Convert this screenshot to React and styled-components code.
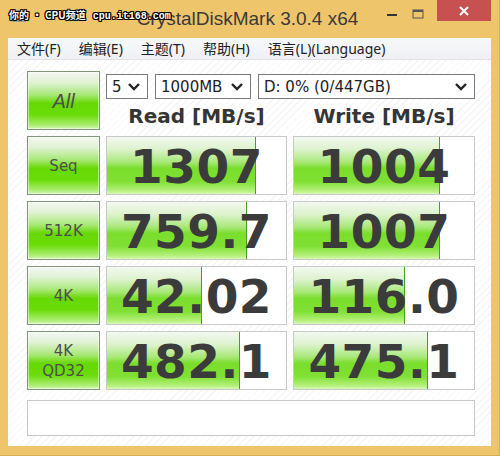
import styled, {createGlobalStyle} from 'styled-components';

const GlobalStyle = createGlobalStyle`
  html, body {
    margin: 0;
    padding: 0;
    background: #ffffff;
  }
`;

const results = [
  {label: ['Seq'], read: {text: '1307', fill: 148}, write: {text: '1004', fill: 145}},
  {label: ['512K'], read: {text: '759.7', fill: 139}, write: {text: '1007', fill: 145}},
  {label: ['4K'], read: {text: '42.02', fill: 94}, write: {text: '116.0', fill: 110}},
  {label: ['4K', 'QD32'], read: {text: '482.1', fill: 132}, write: {text: '475.1', fill: 133}},
];

const menus = ['文件(F)', '编辑(E)', '主题(T)', '帮助(H)', '语言(L)(Language)'];

const Chevron = () => (
  <svg width='14' height='10' viewBox='0 0 14 10'>
    <polyline points='2,2 7,7 12,2' fill='none' stroke='#222' strokeWidth='2.4' />
  </svg>
);

const App = () => {
  return (
    <>
      <GlobalStyle />
      <Window>
        <TitleBar>
          <AppIcon>
            <svg width='18' height='16' viewBox='0 0 18 16'>
              <rect x='1' y='2' width='16' height='12' rx='2' fill='#9aa09a' />
              <rect x='3' y='4' width='12' height='5' fill='#55cc22' />
            </svg>
          </AppIcon>
          <Title>CrystalDiskMark 3.0.4 x64</Title>
          <Controls>
            <CtrlButton>
              <svg width='12' height='12' viewBox='0 0 12 12'>
                <rect x='1' y='6' width='10' height='2' fill='#333' />
              </svg>
            </CtrlButton>
            <CtrlButton>
              <svg width='12' height='12' viewBox='0 0 12 12'>
                <rect x='1' y='2' width='10' height='8' fill='none' stroke='#555' strokeWidth='1' />
                <rect x='1' y='2' width='10' height='2' fill='#555' />
              </svg>
            </CtrlButton>
            <CloseButton>
              <svg width='12' height='12' viewBox='0 0 12 12'>
                <path d='M2 2 L10 10 M10 2 L2 10' stroke='#fff' strokeWidth='2' />
              </svg>
            </CloseButton>
          </Controls>
          <Watermark>
            你的<span className='dot'>•</span>CPU频道<span className='url'>cpu.it168.com</span>
          </Watermark>
        </TitleBar>
        <MenuBar>
          {menus.map((m) => (
            <MenuItem key={m}>{m}</MenuItem>
          ))}
        </MenuBar>
        <Client>
          <Board>
            <LabelButton $italic>All</LabelButton>
            <TopPanel>
              <Selects>
                <Select $w={42}>
                  <span>5</span>
                  <Chevron />
                </Select>
                <Select $w={96}>
                  <span>1000MB</span>
                  <Chevron />
                </Select>
                <Select $w={217}>
                  <span>D: 0% (0/447GB)</span>
                  <Chevron />
                </Select>
              </Selects>
              <Headers>
                <Header>Read [MB/s]</Header>
                <Header>Write [MB/s]</Header>
              </Headers>
            </TopPanel>
            {results.map((r) => (
              <Row key={r.label.join()}>
                <LabelButton>
                  {r.label.map((l) => (
                    <span key={l}>{l}</span>
                  ))}
                </LabelButton>
                <ValueBox $fill={r.read.fill}>{r.read.text}</ValueBox>
                <ValueBox $fill={r.write.fill}>{r.write.text}</ValueBox>
              </Row>
            ))}
          </Board>
          <Comment />
        </Client>
      </Window>
    </>
  );
};

export default App;

const Window = styled.div`
  width: 500px;
  height: 456px;
  box-sizing: border-box;
  display: flex;
  flex-direction: column;
  padding: 0 8px 9px 8px;
  background: #efc56c;
  border-right: 1px solid #d8ad58;
  border-bottom: 1px solid #d8ad58;
  font-family: 'DejaVu Sans', 'Noto Sans CJK SC', sans-serif;
`;

const TitleBar = styled.div`
  position: relative;
  height: 38px;
  flex-shrink: 0;
  display: flex;
  align-items: flex-start;
`;

const AppIcon = styled.div`
  width: 20px;
  padding-top: 8px;
  padding-left: 2px;
`;

const Title = styled.div`
  flex: 1;
  text-align: center;
  padding-top: 7px;
  margin-left: 86px;
  font-family: 'Liberation Sans', Arial, sans-serif;
  font-size: 19px;
  color: #3a3a3a;
  line-height: 24px;
  white-space: nowrap;
`;

const Controls = styled.div`
  display: flex;
  align-items: flex-start;
`;

const CtrlButton = styled.div`
  width: 26px;
  height: 21px;
  display: flex;
  align-items: center;
  justify-content: center;
  margin-top: 3px;
`;

const CloseButton = styled.div`
  width: 54px;
  height: 21px;
  margin-left: 6px;
  display: flex;
  align-items: center;
  justify-content: center;
  background: #c75050;
`;

const Watermark = styled.div`
  position: absolute;
  left: 1px;
  top: 8px;
  font-family: 'Noto Sans CJK SC', sans-serif;
  font-size: 10px;
  font-weight: 700;
  line-height: 14px;
  color: #ffffff;
  white-space: nowrap;
  text-shadow:
    1px 0 0 #000,
    -1px 0 0 #000,
    0 1px 0 #000,
    0 -1px 0 #000,
    1px 1px 0 #000,
    -1px -1px 0 #000,
    1px -1px 0 #000,
    -1px 1px 0 #000;

  .dot {
    margin: 0 3px;
  }

  .url {
    font-family: 'Liberation Mono', monospace;
    font-size: 10px;
    margin-left: 7px;
  }
`;

const MenuBar = styled.div`
  height: 22px;
  flex-shrink: 0;
  display: flex;
  align-items: center;
  gap: 18px;
  padding-left: 9px;
  background: linear-gradient(#f7f8fa, #eef0f3);
  border-top: 1px solid #fbfbfb;
  box-sizing: border-box;
  border-bottom: 1px solid #e3e3e3;
`;

const MenuItem = styled.span`
  font-family: 'Noto Sans', 'Noto Sans CJK SC', sans-serif;
  font-size: 14px;
  color: #222;
  line-height: 20px;
`;

const Client = styled.div`
  flex: 1;
  display: flex;
  flex-direction: column;
  gap: 10px;
  padding: 11px 16px 10px 18px;
  background: repeating-linear-gradient(135deg, #ffffff 0 4px, #f6f6f6 4px 5px);
  border-left: 1px solid #fdfdfd;
`;

const Board = styled.div`
  display: grid;
  grid-template-columns: 73px 181px 182px;
  grid-auto-rows: 59px;
  column-gap: 6px;
  row-gap: 6px;
`;

const Row = styled.div`
  display: contents;
`;

const LabelButton = styled.div`
  box-sizing: border-box;
  display: flex;
  flex-direction: column;
  align-items: center;
  justify-content: center;
  border: 1px solid #7f9478;
  box-shadow: inset 0 0 0 1px rgba(255, 255, 255, 0.5);
  background: linear-gradient(
    #f4f7f2 0%,
    #e0f2d4 18%,
    #a8e876 40%,
    #66d904 55%,
    #6adc08 75%,
    #a6ec6a 92%,
    #d2f6b0 100%
  );
  font-family: ${(p) => (p.$italic ? "'Liberation Sans', Arial, sans-serif" : "'DejaVu Sans', sans-serif")};
  font-size: ${(p) => (p.$italic ? '20px' : '15px')};
  font-style: ${(p) => (p.$italic ? 'italic' : 'normal')};
  color: #4e4e4e;
  line-height: 20px;
`;

const TopPanel = styled.div`
  grid-column: 2 / span 2;
  display: flex;
  flex-direction: column;
`;

const Selects = styled.div`
  display: flex;
  gap: 7px;
  margin-top: 3px;
`;

const Select = styled.div`
  width: ${(p) => p.$w}px;
  height: 25px;
  box-sizing: border-box;
  display: flex;
  align-items: center;
  justify-content: space-between;
  padding: 0 6px 0 5px;
  border: 1px solid #7a7a7a;
  background: #ffffff;
  font-family: 'DejaVu Sans', sans-serif;
  font-size: 15px;
  color: #222;
`;

const Headers = styled.div`
  display: grid;
  grid-template-columns: 181px 182px;
  column-gap: 6px;
  margin-top: 5px;
`;

const Header = styled.div`
  text-align: center;
  font-family: 'DejaVu Sans', sans-serif;
  font-weight: 700;
  font-size: 20px;
  line-height: 24px;
  color: #353535;
`;

const ValueBox = styled.div`
  box-sizing: border-box;
  display: flex;
  align-items: center;
  justify-content: center;
  border: 1px solid #c9c9c9;
  background-color: #ffffff;
  background-image:
    linear-gradient(#4a9e24, #4a9e24),
    linear-gradient(
      #f3f8f0 0%,
      #dcf2cc 22%,
      #a8e878 44%,
      #7ade2c 55%,
      #80e034 78%,
      #b4f07a 94%,
      #d8f8b8 100%
    );
  background-repeat: no-repeat;
  background-size:
    1px 100%,
    ${(p) => p.$fill}px 100%;
  background-position:
    ${(p) => p.$fill}px 0,
    0 0;
  font-family: 'DejaVu Sans', sans-serif;
  font-weight: 700;
  font-size: 47px;
  letter-spacing: 0.5px;
  color: #3b3b3b;
  line-height: 1;
  padding-top: 2px;
`;

const Comment = styled.div`
  height: 36px;
  box-sizing: border-box;
  border: 1px solid #c6c6c6;
  background: #ffffff;
`;
